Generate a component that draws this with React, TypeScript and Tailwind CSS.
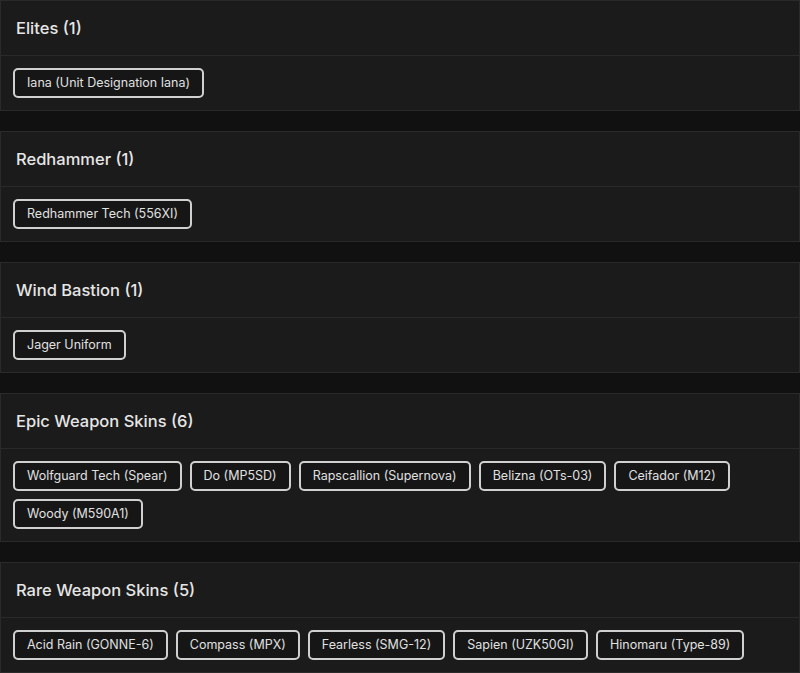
import React from "react";

const groups: { title: string; items: string[] }[] = [
  { title: "Elites (1)", items: ["Iana (Unit Designation Iana)"] },
  { title: "Redhammer (1)", items: ["Redhammer Tech (556XI)"] },
  { title: "Wind Bastion (1)", items: ["Jager Uniform"] },
  {
    title: "Epic Weapon Skins (6)",
    items: [
      "Wolfguard Tech (Spear)",
      "Do (MP5SD)",
      "Rapscallion (Supernova)",
      "Belizna (OTs-03)",
      "Ceifador (M12)",
      "Woody (M590A1)",
    ],
  },
  {
    title: "Rare Weapon Skins (5)",
    items: [
      "Acid Rain (GONNE-6)",
      "Compass (MPX)",
      "Fearless (SMG-12)",
      "Sapien (UZK50GI)",
      "Hinomaru (Type-89)",
    ],
  },
];

export default function App() {
  return (
    <div
      className="min-h-screen bg-[#111111] flex flex-col gap-[20px]"
      style={{ fontFamily: "Inter, 'Noto Sans', sans-serif" }}
    >
      {groups.map((g) => (
        <div key={g.title} className="bg-[#1b1b1b] border border-[#2a2a2a]">
          <div className="h-[55px] flex items-center px-[15px] border-b border-[#2a2a2a]">
            <h2 className="text-[16.5px] font-medium text-[#e6e6e6]">{g.title}</h2>
          </div>
          <div className="p-[12px] flex flex-wrap gap-x-[8px] gap-y-[8px]">
            {g.items.map((it) => (
              <span
                key={it}
                className="h-[30px] px-[12px] flex items-center border-2 border-[#d0d0d0] rounded-[5px] text-[12.5px] text-[#e0e0e0] bg-[#161616]"
              >
                {it}
              </span>
            ))}
          </div>
        </div>
      ))}
    </div>
  );
}
